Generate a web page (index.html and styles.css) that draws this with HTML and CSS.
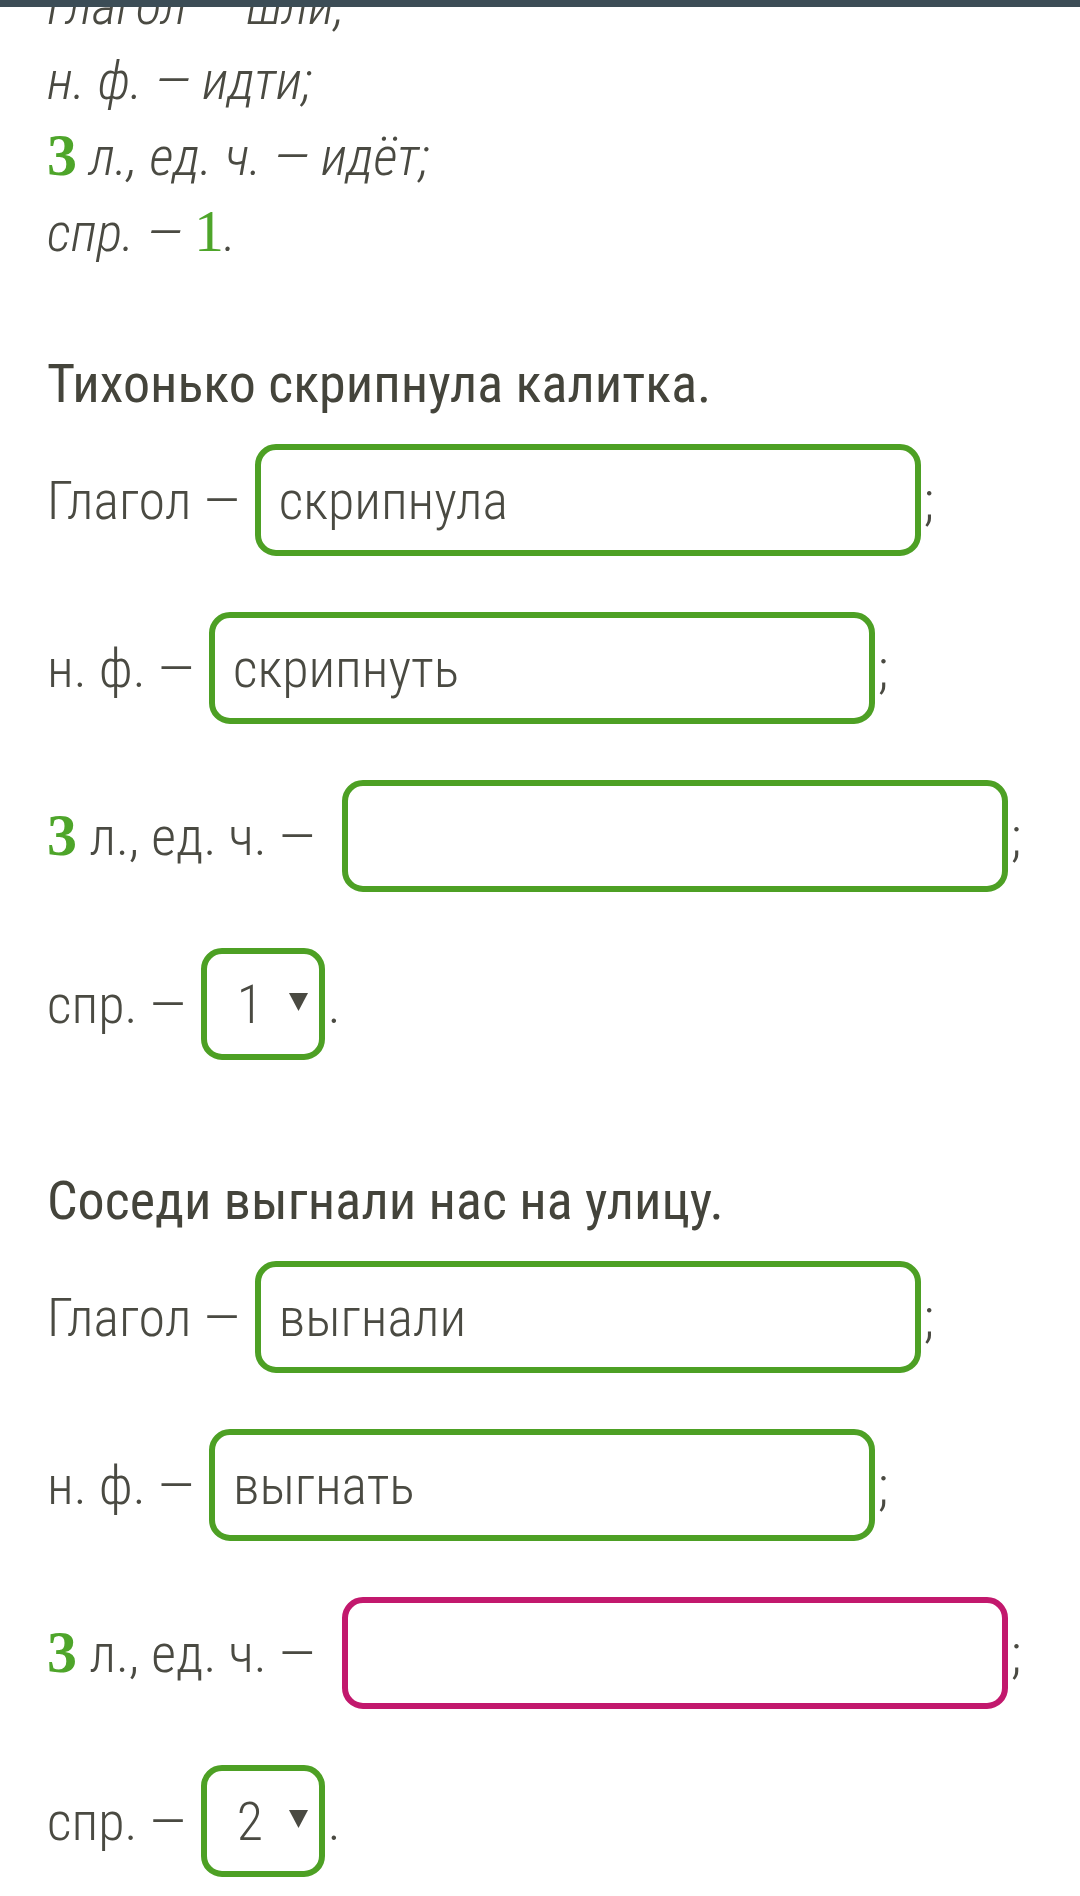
FILE: index.html
```html
<!DOCTYPE html>
<html lang="ru">
<head>
<meta charset="utf-8">
<title>Глагол</title>
<link rel="stylesheet" href="styles.css">
</head>
<body>
<header class="topbar"></header>
<main class="content">
  <div class="given">
    <p class="line">Глагол — шли;</p>
    <p class="line">н. ф. — идти;</p>
    <p class="line"><span class="num num-bold">3</span> л., ед. ч. — идёт;</p>
    <p class="line">спр. — <span class="num">1</span>.</p>
  </div>

  <section class="task">
    <h2 class="title">Тихонько скрипнула калитка.</h2>
    <div class="rows">
      <div class="row"><span class="label">Глагол —</span><input class="field" type="text" value="скрипнула"><span class="punct">;</span></div>
      <div class="row"><span class="label">н. ф. —</span><input class="field" type="text" value="скрипнуть"><span class="punct">;</span></div>
      <div class="row"><span class="label label-wide"><span class="num num-bold">3</span> л., ед. ч. —</span><input class="field" type="text" value=""><span class="punct">;</span></div>
      <div class="row"><span class="label">спр. —</span><span class="select"><span class="select-val">1</span><svg class="arrow" width="19" height="18" viewBox="0 0 19 18"><polygon points="0,0 19,0 9.5,18"/></svg></span><span class="punct">.</span></div>
    </div>
  </section>

  <section class="task">
    <h2 class="title">Соседи выгнали нас на улицу.</h2>
    <div class="rows">
      <div class="row"><span class="label">Глагол —</span><input class="field" type="text" value="выгнали"><span class="punct">;</span></div>
      <div class="row"><span class="label">н. ф. —</span><input class="field" type="text" value="выгнать"><span class="punct">;</span></div>
      <div class="row"><span class="label label-wide"><span class="num num-bold">3</span> л., ед. ч. —</span><input class="field field-wrong" type="text" value=""><span class="punct">;</span></div>
      <div class="row"><span class="label">спр. —</span><span class="select"><span class="select-val">2</span><svg class="arrow" width="19" height="18" viewBox="0 0 19 18"><polygon points="0,0 19,0 9.5,18"/></svg></span><span class="punct">.</span></div>
    </div>
  </section>
</main>
</body>
</html>
```

FILE: styles.css
```css
html, body {
  margin: 0;
  padding: 0;
  background: #ffffff;
}

body {
  font-family: "Roboto Condensed", Roboto, "Liberation Sans", sans-serif;
  font-stretch: 85%;
  font-weight: 300;
  font-size: 54px;
  color: #4a4a42;
  overflow: hidden;
}

.topbar {
  position: fixed;
  top: 0;
  left: 0;
  right: 0;
  height: 7px;
  background: #3c4d56;
  z-index: 5;
}

.content {
  padding: 0 0 0 47px;
}

.given {
  margin-top: -32px;
}

.line {
  margin: 0;
  line-height: 75px;
  font-style: italic;
}

.num {
  font-family: "Liberation Serif", "DejaVu Serif", serif;
  font-stretch: normal;
  font-style: normal;
  font-weight: 400;
  font-size: 60px;
  color: #4ea52a;
}

.num-bold {
  font-weight: 700;
}

.task {
  margin-top: 82px;
}

.task + .task {
  margin-top: 109px;
}

.title {
  margin: 0 0 28px;
  font-size: 54px;
  font-weight: 450;
  font-stretch: 87%;
  line-height: 64px;
  color: #44443b;
}

.rows {
  display: flex;
  flex-direction: column;
  gap: 56px;
}

.row {
  display: flex;
  align-items: baseline;
}

.label {
  margin-right: 15px;
  white-space: nowrap;
}

.label-wide {
  margin-right: 27px;
}

.field {
  box-sizing: border-box;
  width: 666px;
  height: 112px;
  margin: 0;
  padding: 0 18px;
  border: 6px solid #4da024;
  border-radius: 21px;
  background: #fff;
  font: inherit;
  color: inherit;
  outline: none;
}

.field-wrong {
  border-color: #c2186d;
}

.select {
  box-sizing: border-box;
  display: inline-flex;
  align-items: center;
  width: 124px;
  height: 112px;
  padding: 0 11px 0 30px;
  border: 6px solid #4da024;
  border-radius: 21px;
}

.select-val {
  flex: 1;
}

.arrow {
  display: block;
  fill: #4a4a42;
  margin-top: -4px;
}

.punct {
  margin-left: 3px;
}
```
